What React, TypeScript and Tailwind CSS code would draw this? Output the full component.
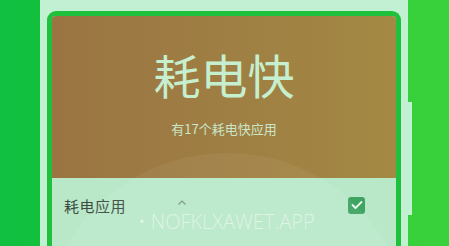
import React from "react";

export default function App() {
  return (
    <div
      className="relative flex w-[449px] h-[246px] overflow-hidden bg-gradient-to-r from-[#0fbf3f] via-[#22c83a] to-[#3ad23c]"
      style={{ fontFamily: '"Noto Sans", "Noto Sans CJK SC", sans-serif' }}
    >
      <div className="ml-[40px] w-[368px] h-full bg-[#c2f0d2] pt-[11px] px-[7px] flex flex-col">
        <div className="relative flex-1 flex flex-col border-[5px] border-b-0 border-[#1ec03c] rounded-t-[9px] overflow-hidden bg-[#b9e8c9]">
          <div className="h-[162px] shrink-0 bg-gradient-to-r from-[#9a7442] to-[#a38944] flex flex-col items-center">
            <div
              className="mt-[28px] text-[47px] leading-[60px] text-[#c6efcf] tracking-[0px]"
              style={{ fontFamily: '"Noto Sans CJK SC", sans-serif', fontWeight: 400 }}
            >
              耗电快
            </div>
            <div
              className="mt-[16px] text-[13px] leading-[18px] text-[#c9e6c8]"
              style={{ fontFamily: '"Noto Sans CJK SC", sans-serif' }}
            >
              有17个耗电快应用
            </div>
          </div>
          <div className="flex items-center h-[56px] pl-[12px] pr-[31px]">
            <span
              className="text-[15px] leading-[20px] text-[#3c4c42] tracking-[0.5px]"
              style={{ fontFamily: '"Noto Sans CJK SC", sans-serif' }}
            >
              耗电应用
            </span>
            <svg className="ml-[51px] mb-[8px]" width="10" height="7" viewBox="0 0 10 7">
              <path d="M1.5 5.5 L5 2 L8.5 5.5" fill="none" stroke="#7c9486" strokeWidth="1.2" />
            </svg>
            <div className="ml-auto mb-[2px] w-[17px] h-[17px] rounded-[3px] bg-[#3ea462] flex items-center justify-center">
              <svg width="12" height="10" viewBox="0 0 12 10">
                <path d="M1.5 5 L4.5 8 L10.5 2" fill="none" stroke="#e8f6ec" strokeWidth="1.8" strokeLinecap="round" strokeLinejoin="round" />
              </svg>
            </div>
          </div>
          <div className="pointer-events-none absolute left-[-10px] top-[137px] w-[370px] h-[370px] rounded-full bg-white/[0.05]" />
        </div>
      </div>
      <div className="mt-[102px] w-[4px] h-[113px] bg-[#c2f0d2]" />
      <div
        className="pointer-events-none absolute left-[138px] top-[208px] text-[20px] leading-[28px] text-white/50 tracking-[0px]"
        style={{ fontFamily: '"Open Sans", sans-serif', fontWeight: 300 }}
      >
        • NOFKLXAWET.APP
      </div>
    </div>
  );
}
